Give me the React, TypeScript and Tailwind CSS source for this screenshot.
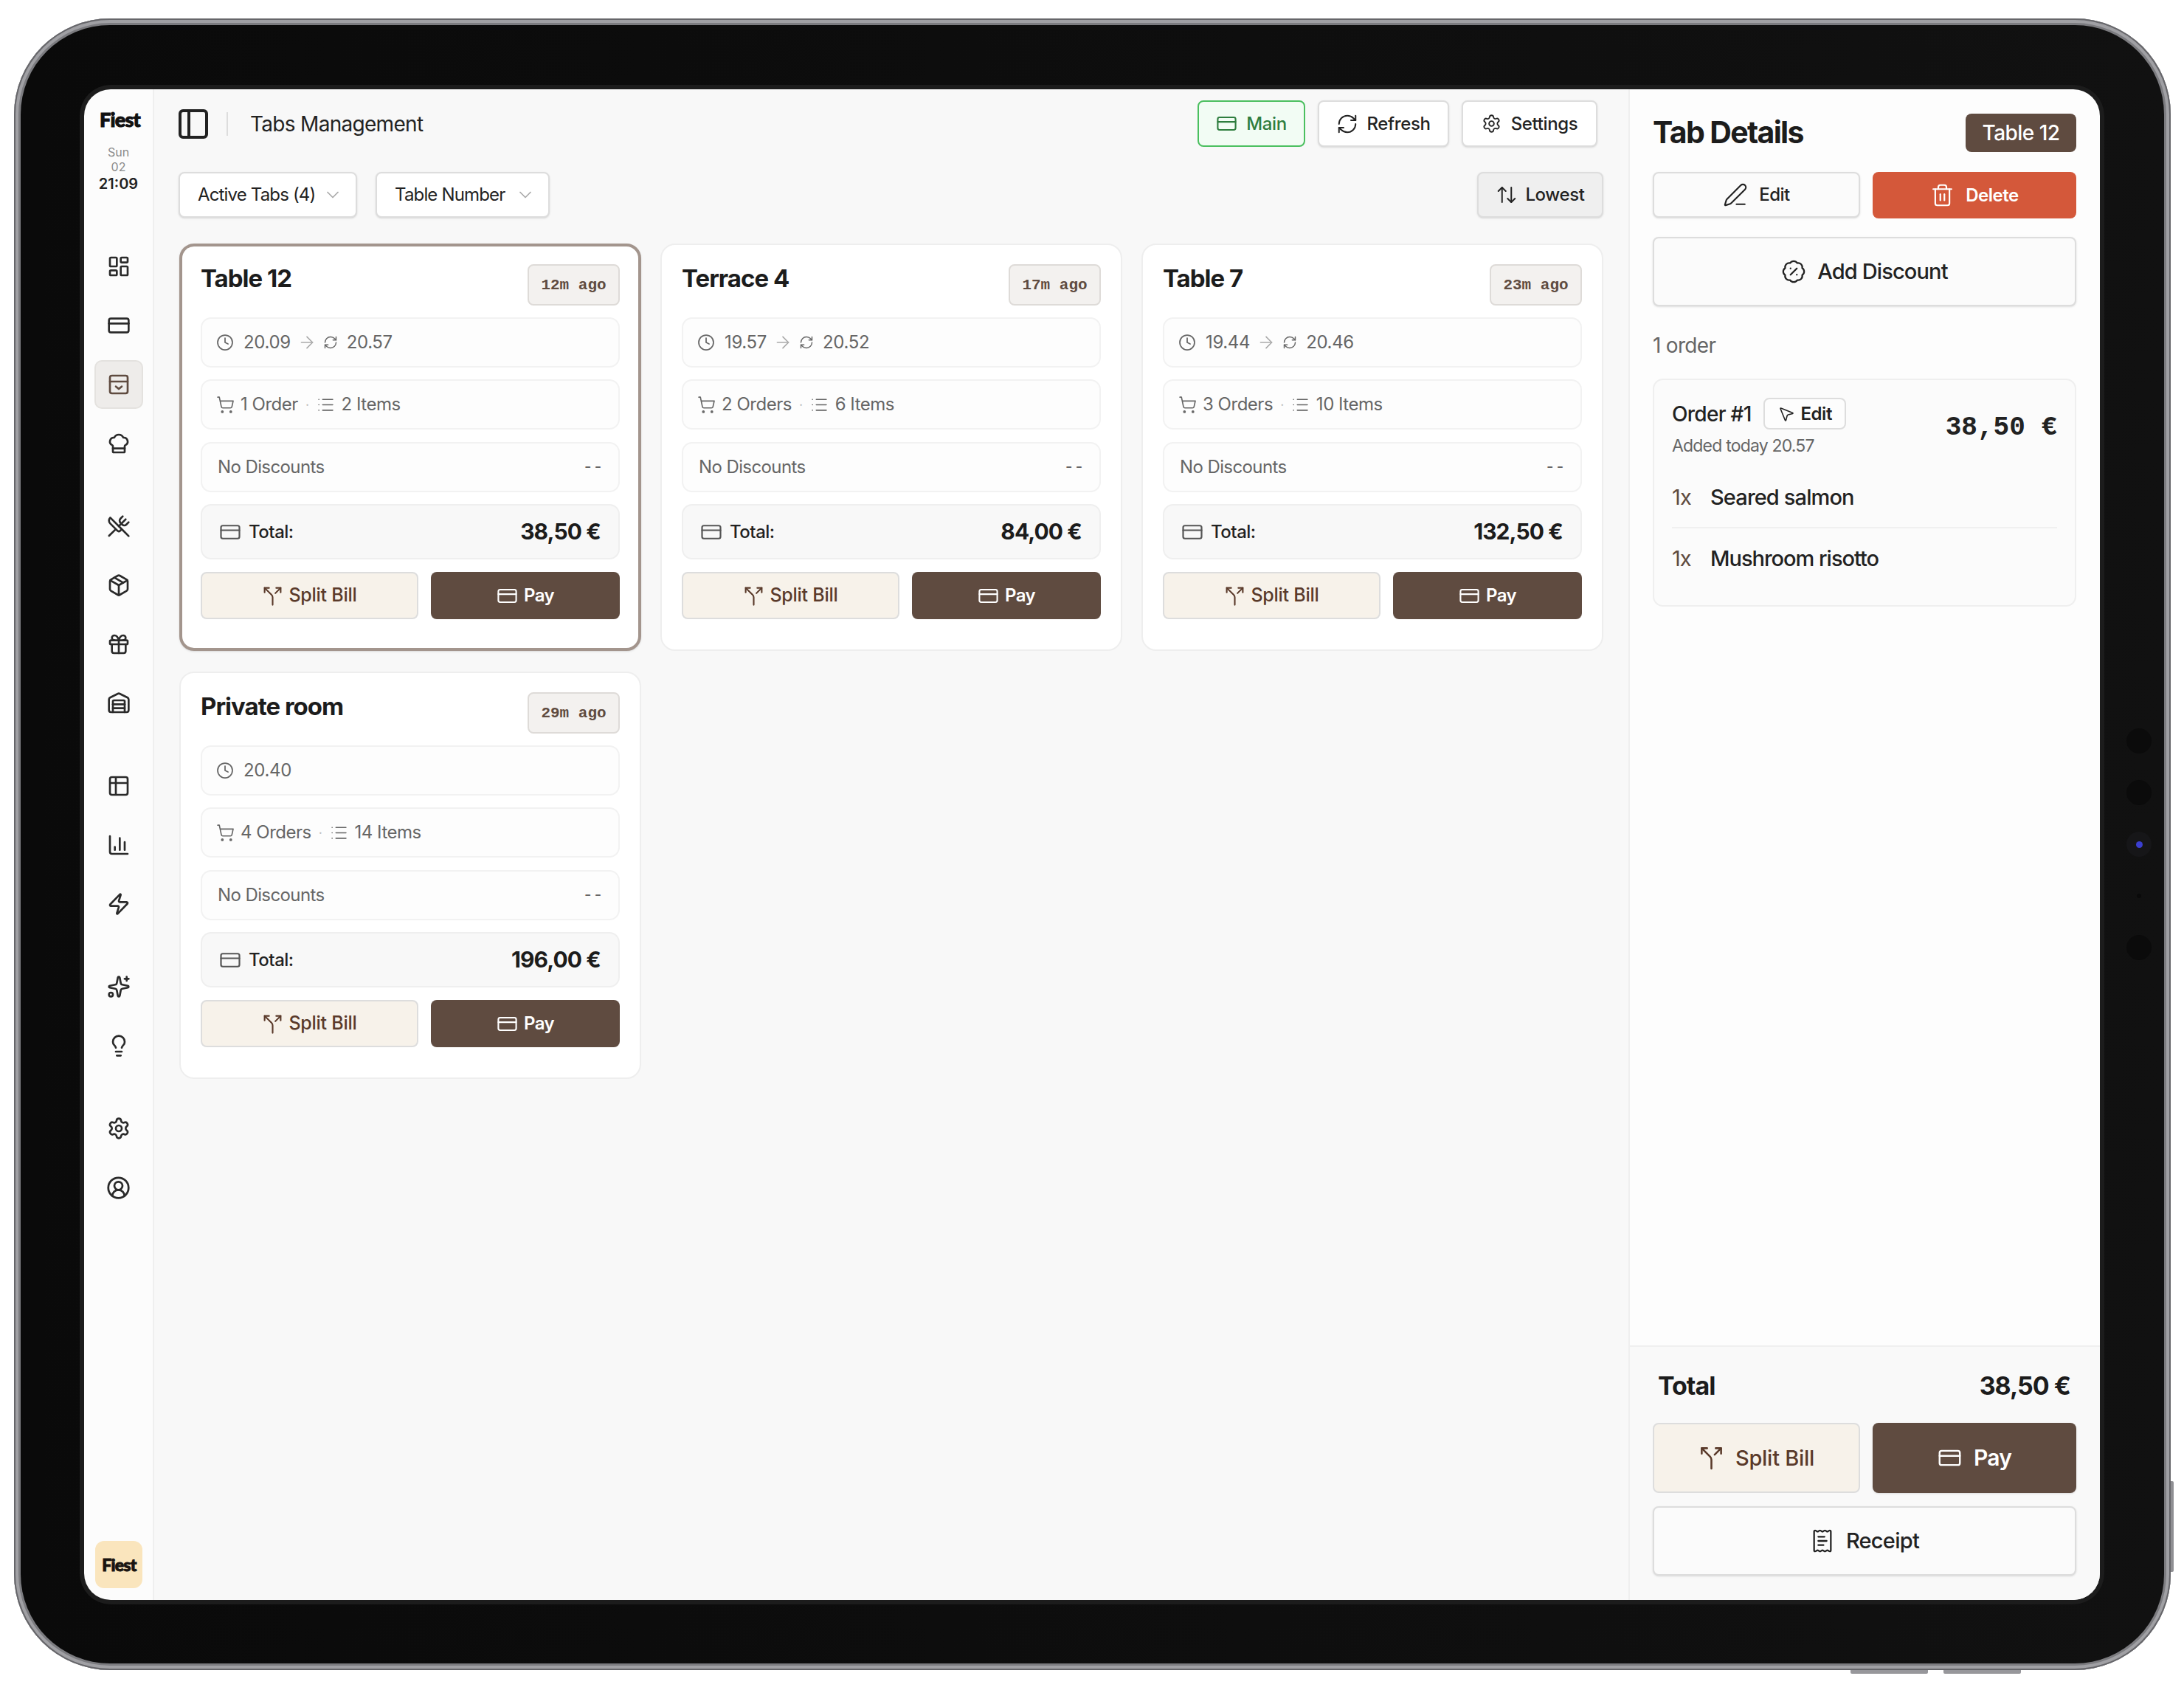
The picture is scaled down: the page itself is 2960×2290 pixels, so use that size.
import {
  ArrowRight,
  ArrowUpDown,
  BadgePercent,
  ChartColumn,
  ChefHat,
  ChevronDown,
  CircleUserRound,
  Clock,
  CreditCard,
  Gift,
  LayoutDashboard,
  Lightbulb,
  List,
  MousePointer2,
  Package,
  PanelLeft,
  PenLine,
  ReceiptText,
  RefreshCw,
  Settings,
  ShoppingCart,
  Sparkles,
  Split,
  Table2,
  Trash2,
  UtensilsCrossed,
  Warehouse,
  Zap,
} from 'lucide-react';

const SANS = 'font-["Inter","Liberation_Sans",sans-serif]';
const MONO = 'font-["Liberation_Mono",monospace]';

const CARDS = [
  { name: 'Table 12', ago: '12m ago', start: '20.09', end: '20.57', orders: '1 Order', items: '2 Items', total: '38,50 €', selected: true },
  { name: 'Terrace 4', ago: '17m ago', start: '19.57', end: '20.52', orders: '2 Orders', items: '6 Items', total: '84,00 €' },
  { name: 'Table 7', ago: '23m ago', start: '19.44', end: '20.46', orders: '3 Orders', items: '10 Items', total: '132,50 €' },
  { name: 'Private room', ago: '29m ago', start: '20.40', orders: '4 Orders', items: '14 Items', total: '196,00 €' },
];

function TabsIcon() {
  return (
    <svg width="32" height="32" viewBox="0 0 24 24" fill="none" stroke="#5f4b40" strokeWidth="2" strokeLinecap="round" strokeLinejoin="round">
      <rect x="3" y="3" width="18" height="18" rx="2" />
      <path d="M3 9h18" />
      <path d="m9 14 3 2.5 3-2.5" />
    </svg>
  );
}

const NAV_GROUPS = [
  [<LayoutDashboard size={32} />, <CreditCard size={32} />, <TabsIcon />, <ChefHat size={32} />],
  [<UtensilsCrossed size={32} />, <Package size={32} />, <Gift size={32} />, <Warehouse size={32} />],
  [<Table2 size={32} />, <ChartColumn size={32} />, <Zap size={32} />],
  [<Sparkles size={32} />, <Lightbulb size={32} />],
  [<Settings size={32} />, <CircleUserRound size={33} />],
];

function Sidebar() {
  return (
    <aside className="w-[95px] shrink-0 flex flex-col items-center border-r-2 border-[#efefef] bg-[#fcfcfc] pb-[16px]">
      <div className="mt-[24px] ml-[4px] h-[32px] flex items-center text-[27px] leading-none font-black tracking-[-0.03em] text-[#111] [-webkit-text-stroke:1px_#111] font-['Lato',sans-serif]">Fiest</div>
      <div className="mt-[19px] flex flex-col items-center text-[#8a8a8a] text-[16px] leading-[20px]">
        <span>Sun</span>
        <span>02</span>
        <span className="text-[20px] leading-[26px] font-semibold text-[#222]">21:09</span>
      </div>
      <nav className="mt-[66px] flex flex-col gap-[46px] text-[#2a2a2a]">
        {NAV_GROUPS.map((group, g) => (
          <div key={g} className="flex flex-col gap-[14px]">
            {group.map((icon, i) => (
              <div
                key={i}
                className={
                  g === 0 && i === 2
                    ? 'w-[66px] h-[66px] flex items-center justify-center rounded-[10px] bg-[#eeecea] border-2 border-[#e4e2df]'
                    : 'w-[66px] h-[66px] flex items-center justify-center'
                }
              >
                {icon}
              </div>
            ))}
          </div>
        ))}
      </nav>
      <div className="mt-auto w-[64px] h-[64px] flex items-center justify-center rounded-[12px] bg-[#fae5bd] pl-[2px] text-[23px] font-black tracking-[-0.03em] text-[#1a1411] [-webkit-text-stroke:1px_#1a1411] font-['Lato',sans-serif]">Fiest</div>
    </aside>
  );
}

function TabCard({ card }: { card: (typeof CARDS)[number] }) {
  return (
    <div
      className={
        card.selected
          ? 'h-[552px] rounded-[20px] border-[4px] border-[#a3958d] bg-white px-[25px] pt-[24px] shadow-sm'
          : 'h-[552px] rounded-[20px] border-2 border-[#eeeeee] bg-white px-[27px] pt-[26px]'
      }
    >
      <div className="h-[56px] flex justify-between">
        <span className="text-[33px] leading-[38px] font-bold tracking-[-0.03em] text-[#1c1c1c]">{card.name}</span>
        <span className={`${MONO} w-[125px] h-[56px] flex items-center justify-center rounded-[8px] border-2 border-[#dedbd8] bg-[#f3f1ef] pt-[2px] text-[21px] font-bold text-[#5f4b40]`}>{card.ago}</span>
      </div>
      <div className="mt-[16px] h-[68px] flex items-center rounded-[14px] border-2 border-[#f2f2f2] bg-[#fdfdfd] px-[19px] text-[24px] tracking-[-0.015em] text-[#666]">
        <Clock size={24} strokeWidth={1.75} className="mr-[13px]" />
        <span>{card.start}</span>
        {card.end && (
          <>
            <ArrowRight size={26} strokeWidth={1.5} className="ml-[9px] text-[#aaa]" />
            <RefreshCw size={20} strokeWidth={1.75} className="ml-[9px] mr-[12px]" />
            <span>{card.end}</span>
          </>
        )}
      </div>
      <div className="mt-[16px] h-[68px] flex items-center rounded-[14px] border-2 border-[#f2f2f2] bg-[#fdfdfd] px-[19px] text-[24px] tracking-[-0.02em] text-[#666]">
        <ShoppingCart size={25} className="mr-[8px]" strokeWidth={1.6} />
        <span>{card.orders}</span>
        <span className="mx-[10px] text-[#bbb] text-[18px]">·</span>
        <List size={25} className="mr-[9px]" strokeWidth={1.6} />
        <span>{card.items}</span>
      </div>
      <div className="mt-[17px] h-[68px] flex items-center justify-between rounded-[14px] border-2 border-[#f2f2f2] bg-[#fdfdfd] pl-[21px] pr-[21px] text-[24px] tracking-[-0.025em] text-[#666]">
        <span>No Discounts</span>
        <span className={MONO}>--</span>
      </div>
      <div className="mt-[16px] h-[75px] flex items-center justify-between rounded-[14px] border-2 border-[#efefef] bg-[#f8f8f8] pl-[23px] pr-[24px]">
        <span className="flex items-center gap-[10px] text-[24px] font-medium tracking-[-0.02em] text-[#222]">
          <CreditCard size={30} strokeWidth={1.75} className="text-[#555]" />
          Total:
        </span>
        <span className="text-[30px] font-bold tracking-[-0.03em] text-[#1c1c1c]">{card.total}</span>
      </div>
      <div className="mt-[17px] flex gap-[17px]">
        <button className="w-[295px] h-[64px] flex items-center justify-center gap-[7px] rounded-[8px] border-2 border-[#dddddd] bg-[#f7f2ea] text-[25px] font-medium tracking-[-0.01em] text-[#5a3a2a]">
          <Split size={29} strokeWidth={1.75} />
          Split Bill
        </button>
        <button className="flex-1 h-[64px] flex items-center justify-center gap-[8px] rounded-[8px] bg-[#5f4b40] text-[24px] font-semibold tracking-[-0.025em] text-white">
          <CreditCard size={29} strokeWidth={1.75} />
          Pay
        </button>
      </div>
    </div>
  );
}

function MainArea() {
  return (
    <main className="w-[1998px] shrink-0 bg-[#f8f8f8] pt-[15px]">
      <header className="h-[63px] pl-[33px] pr-[42px] flex items-center">
        <PanelLeft size={48} strokeWidth={2} className="text-[#222] -ml-[4px]" />
        <div className="ml-[21px] w-[2px] h-[32px] bg-[#dddddd]" />
        <h1 className="ml-[30px] text-[28px] font-normal tracking-[-0.025em] text-[#222]">Tabs Management</h1>
        <div className="ml-auto flex gap-[17px] text-[24px] font-medium tracking-[-0.015em]">
          <button className="w-[146px] h-[63px] flex items-center justify-center gap-[12px] rounded-[8px] border-2 border-[#4bbf5f] bg-[#f2fcf4] text-[#2e7d3e]">
            <CreditCard size={29} strokeWidth={1.75} />
            Main
          </button>
          <button className="w-[178px] h-[63px] flex items-center justify-center gap-[11px] rounded-[8px] border-2 border-[#dddddd] bg-white text-[#222] shadow-sm">
            <RefreshCw size={30} strokeWidth={1.6} />
            Refresh
          </button>
          <button className="w-[184px] h-[63px] flex items-center justify-center gap-[13px] rounded-[8px] border-2 border-[#dddddd] bg-white text-[#222] shadow-sm">
            <Settings size={27} strokeWidth={1.6} />
            Settings
          </button>
        </div>
      </header>

      <div className="mt-[34px] h-[62px] pl-[33px] pr-[34px] flex items-center gap-[25px] text-[24px] tracking-[-0.035em] text-[#222]">
        <button className="w-[242px] h-[62px] flex items-center justify-between rounded-[8px] border-2 border-[#dddddd] bg-white pl-[24px] pr-[17px] shadow-sm">
          Active Tabs (4)
          <ChevronDown size={28} strokeWidth={1.5} className="text-[#aaa]" />
        </button>
        <button className="w-[236px] h-[62px] flex items-center justify-between rounded-[8px] border-2 border-[#dddddd] bg-white pl-[24px] pr-[17px] shadow-sm">
          Table Number
          <ChevronDown size={28} strokeWidth={1.5} className="text-[#aaa]" />
        </button>
        <button className="ml-auto w-[171px] h-[62px] flex items-center justify-center gap-[10px] rounded-[8px] border-2 border-[#dddddd] bg-[#efefef] font-medium tracking-[-0.015em] shadow-sm">
          <ArrowUpDown size={30} strokeWidth={1.6} />
          Lowest
        </button>
      </div>

      <div className="mt-[35px] pl-[34px] pr-[34px] grid grid-cols-3 gap-x-[26px] gap-y-[28px]">
        {CARDS.map((card) => (
          <TabCard key={card.name} card={card} />
        ))}
      </div>
    </main>
  );
}

function DetailsPanel() {
  return (
    <section className="flex-1 min-w-0 flex flex-col border-l-2 border-[#efefef] bg-[#fdfdfd]">
      <div className="flex-1 pl-[31px] pr-[32px] pt-[33px]">
        <div className="h-[52px] flex items-center justify-between">
          <h2 className="text-[41px] font-bold tracking-[-0.04em] text-[#1c1c1c]">Tab Details</h2>
          <span className="w-[150px] h-[52px] flex items-center justify-center rounded-[8px] bg-[#5f4b40] text-[28px] font-medium tracking-[-0.02em] text-white">Table 12</span>
        </div>
        <div className="mt-[27px] flex gap-[17px]">
          <button className="w-[281px] h-[62px] flex items-center justify-center gap-[15px] rounded-[8px] border-2 border-[#dddddd] bg-[#fbfbfb] text-[24px] font-medium tracking-[-0.02em] text-[#222] shadow-sm">
            <PenLine size={34} strokeWidth={1.5} />
            Edit
          </button>
          <button className="flex-1 h-[63px] flex items-center justify-center gap-[15px] rounded-[8px] bg-[#d4583a] text-[24px] font-semibold tracking-[-0.02em] text-white">
            <Trash2 size={33} strokeWidth={1.6} />
            Delete
          </button>
        </div>
        <button className="mt-[25px] w-full h-[94px] flex items-center justify-center gap-[15px] rounded-[8px] border-2 border-[#dddddd] bg-[#fbfbfb] text-[29px] font-medium tracking-[-0.03em] text-[#222] shadow-sm">
          <BadgePercent size={34} strokeWidth={1.6} />
          Add Discount
        </button>
        <div className="mt-[35px] text-[28px] leading-[36px] tracking-[-0.025em] text-[#666]">1 order</div>
        <div className="mt-[27px] h-[309px] rounded-[14px] border-2 border-[#efefef] bg-[#fbfbfb] px-[24px] pt-[24px]">
          <div className="flex justify-between">
            <div>
              <div className="h-[43px] flex items-center">
                <span className="text-[28px] font-medium tracking-[-0.025em] text-[#222]">Order #1</span>
                <span className="ml-[16px] w-[112px] h-[43px] flex items-center justify-center gap-[8px] rounded-[8px] border-2 border-[#dddddd] bg-[#fdfdfd] text-[24px] font-semibold tracking-[-0.02em] text-[#222]">
                  <MousePointer2 size={24} strokeWidth={1.6} />
                  Edit
                </span>
              </div>
              <div className="mt-[8px] text-[23px] leading-[28px] tracking-[-0.035em] text-[#666]">Added today 20.57</div>
            </div>
            <span className={`${MONO} mt-[20px] text-[36px] leading-[42px] font-bold text-[#222]`}>38,50 €</span>
          </div>
          <div className="mt-[32px] h-[66px] flex items-center border-b-2 border-[#f0f0f0] pb-[16px] text-[29px] font-medium tracking-[-0.03em] text-[#222]">
            <span className="w-[52px] font-normal text-[#5f4b40]">1x</span>
            Seared salmon
          </div>
          <div className="h-[82px] flex items-center text-[29px] font-medium tracking-[-0.035em] text-[#222]">
            <span className="w-[52px] font-normal text-[#5f4b40]">1x</span>
            Mushroom risotto
          </div>
        </div>
      </div>

      <div className="h-[345px] shrink-0 border-t-2 border-[#f0f0f0] bg-[#f9f9f9] pl-[31px] pr-[32px]">
        <div className="h-[103px] pt-[2px] flex items-center justify-between pl-[7px] pr-[8px] text-[34px] font-bold tracking-[-0.03em] text-[#1c1c1c]">
          <span>Total</span>
          <span>38,50 €</span>
        </div>
        <div className="flex gap-[17px]">
          <button className="w-[281px] h-[95px] flex items-center justify-center gap-[15px] rounded-[8px] border-2 border-[#dddddd] bg-[#f7f2ea] text-[29px] font-medium tracking-[-0.01em] text-[#5a3a2a]">
            <Split size={35} strokeWidth={1.75} />
            Split Bill
          </button>
          <button className="flex-1 h-[95px] flex items-center justify-center gap-[16px] rounded-[8px] bg-[#5f4b40] text-[30px] font-semibold tracking-[-0.025em] text-white shadow-sm">
            <CreditCard size={33} strokeWidth={1.75} />
            Pay
          </button>
        </div>
        <button className="mt-[18px] w-full h-[94px] flex items-center justify-center gap-[15px] rounded-[8px] border-2 border-[#dddddd] bg-[#fbfbfb] text-[29px] font-medium tracking-[-0.025em] text-[#222] shadow-sm">
          <ReceiptText size={34} strokeWidth={1.6} />
          Receipt
        </button>
      </div>
    </section>
  );
}

function BezelSensors() {
  return (
    <div className="absolute left-[2854px] top-[953px] w-[34px] flex flex-col items-center gap-[36px]">
      <div className="w-[34px] h-[34px] rounded-full bg-[#0b0b0b]" />
      <div className="w-[34px] h-[34px] rounded-full bg-[#0b0b0b]" />
      <div className="w-[34px] h-[34px] rounded-full bg-[#161618] flex items-center justify-center">
        <div className="w-[9px] h-[9px] rounded-full bg-[#3b3fd0]" />
      </div>
      <div className="w-[34px] h-[34px] flex items-center justify-center">
        <div className="w-[6px] h-[6px] rounded-full bg-[#0a0a0a]" />
      </div>
      <div className="w-[34px] h-[34px] rounded-full bg-[#0b0b0b]" />
    </div>
  );
}

export default function App() {
  return (
    <div className={`${SANS} w-[2960px] h-[2290px] bg-white pl-[19px] pt-[25px]`}>
      <div className="relative w-[2923px] h-[2238px] rounded-[130px] bg-[#7c7c80] shadow-[inset_0_0_0_2px_#66666a,inset_0_0_0_6px_#a0a0a4] p-[9px]">
        {/* side and bottom hardware buttons */}
        <div className="absolute -right-[4px] top-[1982px] w-[4px] h-[123px] rounded-r-[2px] bg-[#8f8f93]" />
        <div className="absolute left-[2489px] -bottom-[5px] w-[105px] h-[5px] rounded-b-[2px] bg-[#97979b]" />
        <div className="absolute left-[2615px] -bottom-[5px] w-[105px] h-[5px] rounded-b-[2px] bg-[#97979b]" />
        <div className="relative h-full rounded-[121px] bg-gradient-to-r from-[#0a0a0a] to-[#111111] pl-[86px] pr-[87px] pt-[87px] pb-[86px]">
          <BezelSensors />
          <div className="h-full flex overflow-hidden rounded-[36px] shadow-[0_0_0_6px_#1c1c1c]">
            <Sidebar />
            <MainArea />
            <DetailsPanel />
          </div>
        </div>
      </div>
    </div>
  );
}
